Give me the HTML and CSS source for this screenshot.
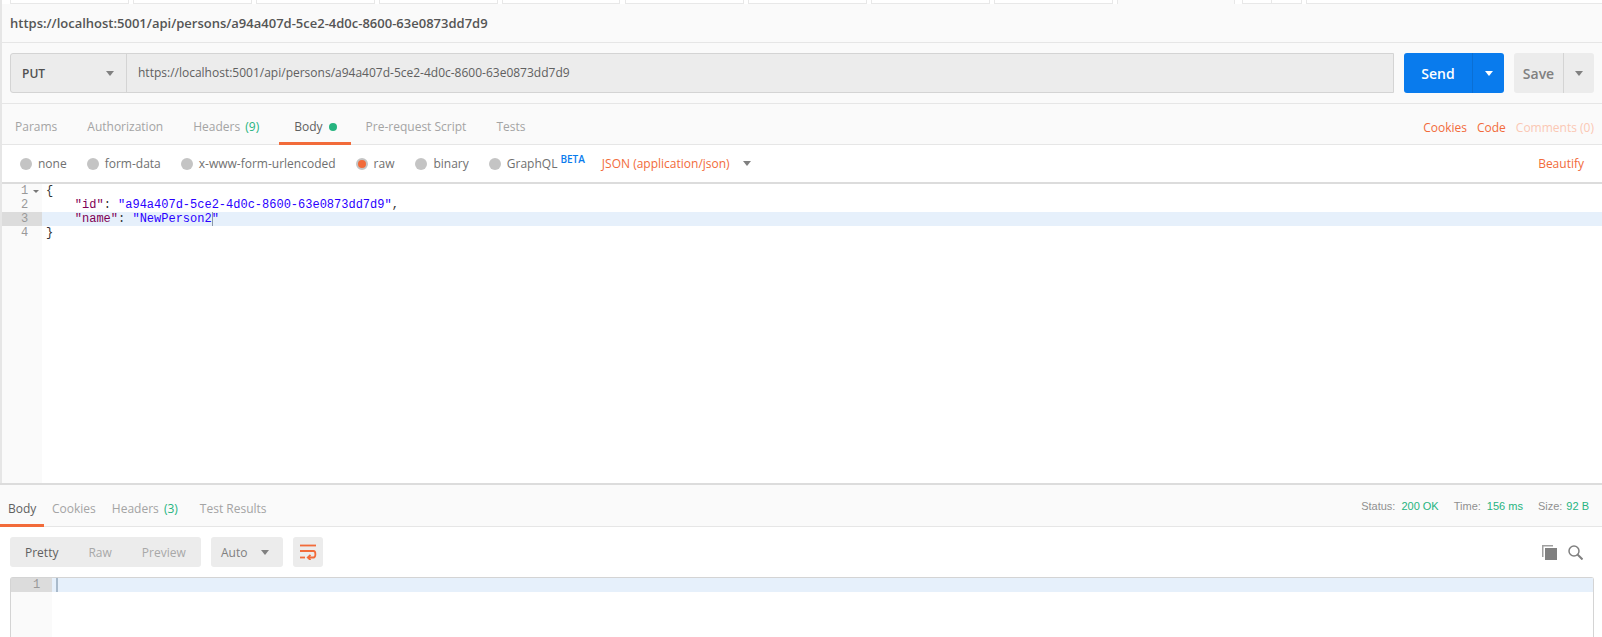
FILE: index.html
```html
<!DOCTYPE html>
<html lang="en">
<head>
<meta charset="utf-8">
<title>Postman request</title>
<link rel="stylesheet" href="styles.css">
</head>
<body>
<div class="app">
  <section class="request">
    <div class="tabstrip">
      <span class="st"></span><span class="st"></span><span class="st"></span><span class="st"></span><span class="st st-w"></span><span class="st"></span><span class="st"></span><span class="st"></span><span class="st"></span>
      <span class="st st-active"></span><span class="st st-a"></span><span class="st st-b"></span><span class="st-rest"></span>
    </div>
    <div class="titlebar">https://localhost:5001/api/persons/a94a407d-5ce2-4d0c-8600-63e0873dd7d9</div>
    <div class="urlrow">
      <div class="urlbox">
        <div class="method"><span>PUT</span><i class="caret caret-grey"></i></div>
        <div class="urltext">https://localhost:5001/api/persons/a94a407d-5ce2-4d0c-8600-63e0873dd7d9</div>
      </div>
      <div class="btn send"><span class="btn-label">Send</span><span class="btn-arrow"><i class="caret caret-white"></i></span></div>
      <div class="btn save"><span class="btn-label">Save</span><span class="btn-arrow"><i class="caret caret-grey"></i></span></div>
    </div>
    <div class="reqtabs">
      <span class="tab">Params</span>
      <span class="tab">Authorization</span>
      <span class="tab tab-h">Headers <span class="count">(9)</span></span>
      <span class="tab tab-on">Body<i class="dot"></i></span>
      <span class="tab">Pre-request Script</span>
      <span class="tab">Tests</span>
      <span class="links"><span class="link">Cookies</span><span class="link">Code</span><span class="link link-off">Comments (0)</span></span>
    </div>
    <div class="bodytypes">
      <label class="radio r-none"><i class="rd"></i>none</label>
      <label class="radio r-form"><i class="rd"></i>form-data</label>
      <label class="radio r-url"><i class="rd"></i>x-www-form-urlencoded</label>
      <label class="radio r-raw"><i class="rd rd-on"></i>raw</label>
      <label class="radio r-bin"><i class="rd"></i>binary</label>
      <label class="radio r-gql"><i class="rd"></i>GraphQL<sup class="beta">BETA</sup></label>
      <span class="jsonsel">JSON (application/json)<i class="caret caret-grey"></i></span>
      <span class="link beautify">Beautify</span>
    </div>
    <div class="editor">
      <div class="gutter">
        <div class="gl">1<i class="fold"></i></div>
        <div class="gl">2</div>
        <div class="gl gl-on">3</div>
        <div class="gl">4</div>
      </div>
      <div class="code">
        <div class="cl">{</div>
        <div class="cl">    <span class="k">"id"</span>: <span class="s">"a94a407d-5ce2-4d0c-8600-63e0873dd7d9"</span>,</div>
        <div class="cl cl-on">    <span class="k">"name"</span>: <span class="s">"NewPerson2<i class="cursor"></i>"</span></div>
        <div class="cl">}</div>
      </div>
    </div>
  </section>
  <section class="response">
    <div class="restabs">
      <span class="rtab rtab-on">Body</span>
      <span class="rtab">Cookies</span>
      <span class="rtab">Headers <span class="count">(3)</span></span>
      <span class="rtab rtab-t">Test Results</span>
      <div class="stats">
        <span class="stat">Status:<b>200 OK</b></span>
        <span class="stat">Time:<b>156 ms</b></span>
        <span class="stat stat-size">Size:<b>92 B</b></span>
      </div>
    </div>
    <div class="toolbar">
      <div class="seg">
        <span class="seg-i seg-on">Pretty</span><span class="seg-i seg-raw">Raw</span><span class="seg-i seg-pre">Preview</span>
      </div>
      <div class="auto"><span>Auto</span><i class="caret caret-grey"></i></div>
      <div class="wrapbtn">
        <svg width="18" height="16" viewBox="0 0 18 16" fill="none" stroke="#f26b3a" stroke-width="1.8">
          <path d="M1 1.500H17"/>
          <path d="M1 7H14.500C17 7 17 13.500 14.500 13.500H9"/>
          <path d="M11.500 11L8.800 13.500L11.500 16"/>
          <path d="M1 13.500H6"/>
        </svg>
      </div>
      <div class="tools">
        <svg width="15" height="15" viewBox="0 0 15 15">
          <path d="M0 0H11V1.500H1.500V12H0Z" fill="#a0a0a0"/>
          <rect x="3" y="3" width="12" height="12" fill="#808080"/>
        </svg>
        <svg width="15" height="15" viewBox="0 0 15 15" fill="none" stroke="#808080" stroke-width="1.500">
          <circle cx="6" cy="6" r="5"/>
          <path d="M9.500 9.500L14.500 14.500" stroke-width="2"/>
        </svg>
      </div>
    </div>
    <div class="resbody">
      <div class="rgutter"><div class="rgl">1</div></div>
      <div class="rcode"><div class="rcl"><i class="rcursor"></i></div></div>
    </div>
  </section>
</div>
</body>
</html>
```
FILE: styles.css
```css
* { box-sizing: border-box; }
html, body { margin: 0; padding: 0; }
body {
  width: 1602px;
  height: 637px;
  overflow: hidden;
  background: #fff;
  font-family: "Open Sans", sans-serif;
  font-size: 12px;
  color: #505050;
}
i { display: block; font-style: normal; }
.app { display: flex; flex-direction: column; height: 637px; }

.request { border-left: 2px solid #e6e6e6; display: flex; flex-direction: column; height: 484px; flex: none; }

/* Top strip with cropped tabs */
.tabstrip { display: flex; height: 4px; padding-left: 8px; background: #fff; flex: none; }
.st { width: 119px; margin-right: 4px; border: 1px solid #e8e8e8; border-top: 0; }
.st-w { margin-right: 5px; width: 118px; }
.st-active { background: #fafafa; border-bottom: 0; width: 118px; margin-right: 7px; }
.st-a { width: 30px; margin-right: 0; }
.st-b { width: 30px; margin-right: 4px; border-left: 0; }
.st-rest { flex: 1; border-left: 1px solid #e8e8e8; border-bottom: 1px solid #e8e8e8; }

.titlebar {
  height: 39px;
  padding-left: 8px;
  background: #fafafa;
  border-bottom: 1px solid #e6e6e6;
  font-size: 13px;
  font-weight: 600;
  line-height: 38px;
  color: #555;
  flex: none;
}

.urlrow {
  display: flex;
  height: 61px;
  padding: 10px 8px 0 8px;
  background: #fafafa;
  border-bottom: 1px solid #e6e6e6;
  flex: none;
}
.urlbox {
  display: flex;
  width: 1384px;
  height: 40px;
  background: #ececec;
  border: 1px solid #d4d4d4;
  border-radius: 3px 0 0 3px;
  margin-right: 10px;
}
.method {
  width: 116px;
  padding: 0 12px 0 11px;
  display: flex;
  align-items: center;
  justify-content: space-between;
  border-right: 1px solid #d4d4d4;
  font-weight: 600;
  color: #505050;
}
.urltext { padding-left: 11px; line-height: 37px; color: #606060; }

.caret { width: 0; height: 0; border-left: 4.5px solid transparent; border-right: 4.5px solid transparent; }
.caret-grey { border-top: 5px solid #808080; }
.caret-white { border-top: 5px solid #fff; }

.btn { display: flex; height: 40px; border-radius: 3px; font-size: 14px; font-weight: 600; }
.btn-label { display: flex; align-items: center; justify-content: center; }
.btn-arrow { display: flex; align-items: center; justify-content: center; }
.send { width: 100px; margin-right: 10px; background: #097bed; color: #fff; }
.send .btn-label { width: 69px; border-right: 1px solid #0a6fd4; }
.send .btn-arrow { width: 31px; }
.save { width: 80px; background: #ececec; color: #808080; }
.save .btn-label { width: 50px; border-right: 1px solid #d4d4d4; }
.save .btn-arrow { width: 30px; }

.reqtabs {
  display: flex;
  height: 41px;
  background: #fafafa;
  border-bottom: 1px solid #e6e6e6;
  flex: none;
}
.tab {
  padding: 0 15px;
  height: 41px;
  line-height: 46px;
  color: #a4a4a4;
  white-space: nowrap;
}
.tab:first-child { padding-left: 13px; }
.tab-h { margin-right: 5px; color: #a4a4a4; }
.count { color: #26b47f; margin-left: 2px; }
.tab-on { color: #606060; border-bottom: 3px solid #f26b3a; display: flex; align-items: flex-start; padding-right: 14px; }
.dot { width: 8px; height: 8px; border-radius: 50%; background: #26b47f; margin: 19px 0 0 6px; }
.links { margin-left: auto; display: flex; padding-right: 8px; line-height: 48px; }
.link { color: #f26b3a; margin-left: 10px; }
.link-off { color: #fbc8b4; }

.bodytypes {
  display: flex;
  align-items: center;
  height: 39px;
  border-bottom: 2px solid #dcdcdc;
  padding-left: 18px;
  flex: none;
  color: #707070;
}
.radio { display: flex; align-items: center; white-space: nowrap; position: relative; }
.rd { width: 12px; height: 12px; border-radius: 50%; background: #c4c4c4; margin-right: 6px; }
.rd-on { background: #f26b3a; border: 2px solid #c4c4c4; }
.r-none { margin-right: 20px; }
.r-form { margin-right: 20px; }
.r-url { margin-right: 20px; }
.r-raw { margin-right: 21px; }
.r-bin { margin-right: 20px; }
.r-gql { margin-right: 17px; }
.beta {
  color: #097bed;
  font-size: 10px;
  font-weight: 600;
  line-height: 10px;
  margin: -9px 0 0 3px;
}
.jsonsel { display: flex; align-items: center; color: #f26b3a; }
.jsonsel .caret { margin-left: 13px; }
.beautify { margin-left: auto; padding-right: 18px; }

.editor { display: flex; flex: 1; }
.gutter { width: 40px; background: #fafafa; flex: none; font-family: "Liberation Mono", monospace; font-size: 12px; line-height: 14px; color: #999; }
.gl { height: 14px; display: flex; padding-left: 19px; position: relative; }
.gl-on { background: #dcdcdc; }
.fold { width: 0; height: 0; margin: 6px 0 0 5px; border-left: 3px solid transparent; border-right: 3px solid transparent; border-top: 3px solid #777; }
.code { flex: 1; font-family: "Liberation Mono", monospace; font-size: 12px; line-height: 14px; color: #333; }
.cl { height: 14px; padding-left: 4px; white-space: pre; }
.cl-on { background: #e6f0fb; }
.k { color: #7f0055; }
.s { color: #2a00ff; }
.cursor { display: inline-block; width: 1px; height: 14px; margin: 0 -1px 0 0; background: #8a98a8; vertical-align: top; }

.response { flex: 1; display: flex; flex-direction: column; border-top: 2px solid #dcdcdc; margin-top: -1px; min-height: 0; }
.restabs {
  display: flex;
  height: 42px;
  background: #fafafa;
  border-bottom: 1px solid #e6e6e6;
  flex: none;
}
.rtab { padding: 0 8px; height: 42px; line-height: 48px; color: #a4a4a4; white-space: nowrap; }
.rtab-on { color: #606060; border-bottom: 3px solid #f26b3a; width: 44px; padding-right: 0; }
.rtab-t { margin-left: 6px; }
.stats { margin-left: auto; display: flex; padding-right: 13px; font-family: "Liberation Sans", sans-serif; font-size: 11px; line-height: 43px; color: #909090; }
.stat { margin-left: 15px; }
.stat b { font-weight: 400; color: #26b47f; margin-left: 6px; }
.stat-size b { margin-left: 4px; }

.toolbar { display: flex; align-items: center; height: 30px; margin: 10px 0 10px 10px; flex: none; }
.seg, .auto, .wrapbtn { background: #ececec; border-radius: 3px; height: 30px; display: flex; align-items: center; }
.seg { width: 191px; padding-left: 15px; margin-right: 10px; }
.seg-i { color: #a8a8a8; }
.seg-on { color: #606060; margin-right: 30px; }
.seg-raw { margin-right: 30px; }
.auto { width: 72px; padding: 0 14px 0 10px; justify-content: space-between; color: #808080; margin-right: 10px; }
.wrapbtn { width: 30px; justify-content: center; }
.tools { margin-left: auto; display: flex; gap: 11px; padding-right: 19px; }

.resbody {
  display: flex;
  flex: 1;
  margin: 0 8px 0 10px;
  border: 1px solid #d4d4d4;
  border-bottom: 0;
  border-radius: 3px 3px 0 0;
  font-family: "Liberation Mono", monospace;
  font-size: 12px;
  line-height: 14px;
  min-height: 0;
}
.rgutter { width: 41px; background: #fafafa; flex: none; color: #999; }
.rgl { height: 14px; background: #dcdcdc; padding-left: 22px; }
.rcode { flex: 1; }
.rcl { height: 14px; background: #e6f0fb; padding-left: 4px; }
.rcursor { width: 2px; height: 14px; background: #a9bacb; }
```
